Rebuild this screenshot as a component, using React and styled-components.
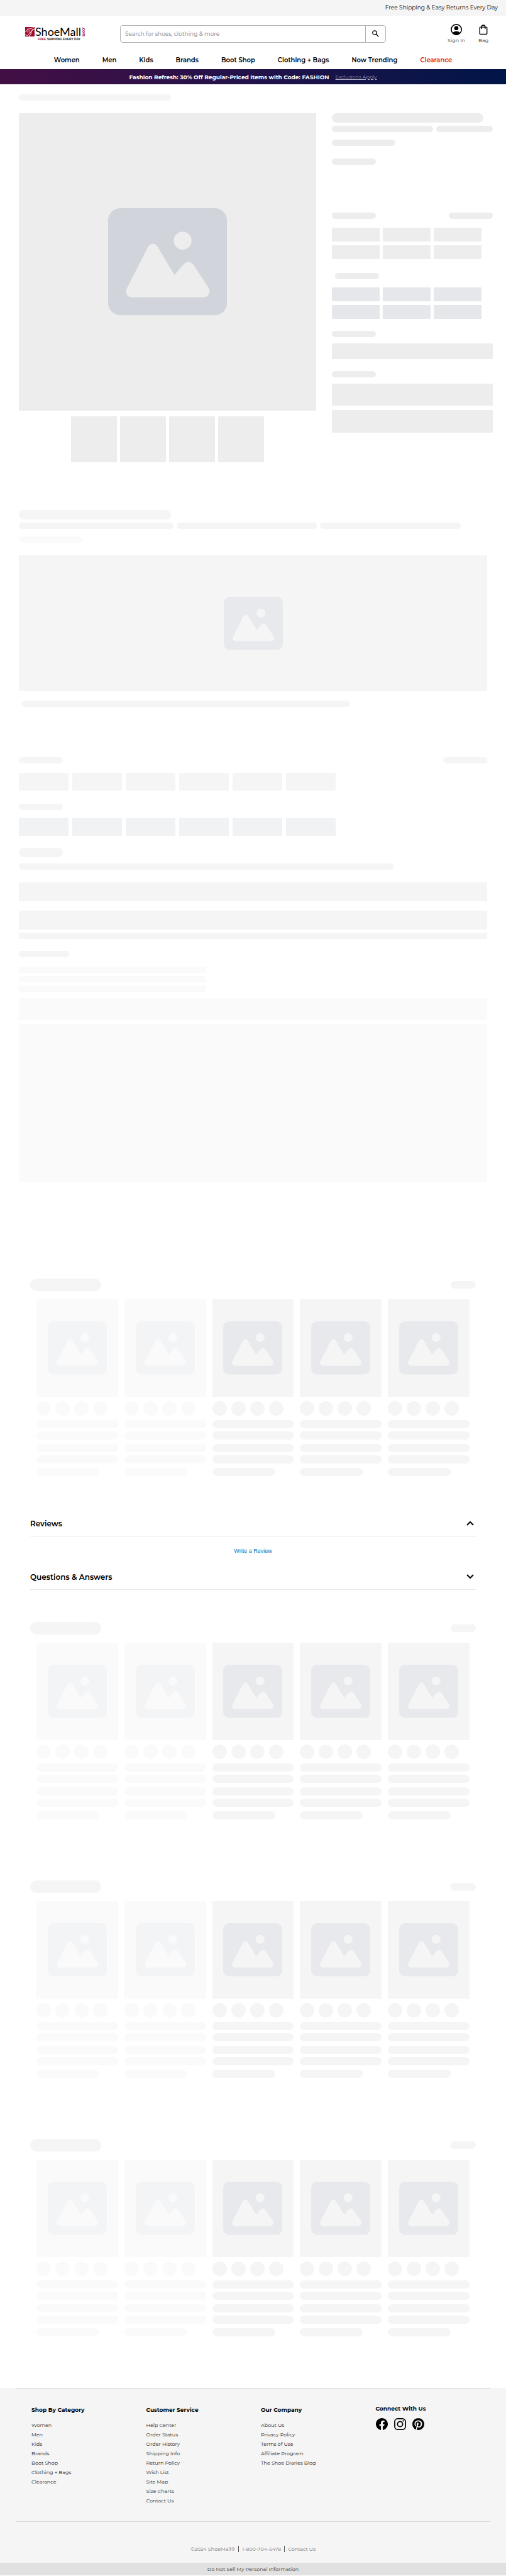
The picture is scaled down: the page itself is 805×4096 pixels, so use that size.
import React from "react";
import styled, { createGlobalStyle } from "styled-components";

const GlobalStyle = createGlobalStyle`
  *, *::before, *::after { box-sizing: border-box; }
  body { margin: 0; background: #fff; color: #000; font-family: Montserrat, Inter, "Liberation Sans", sans-serif; }
  a { color: inherit; text-decoration: none; }
  button { font: inherit; color: inherit; background: none; border: 0; padding: 0; cursor: pointer; }
  ul, h2, h3, p { margin: 0; padding: 0; list-style: none; }
  svg { display: block; }
`;

/* ---------- header ---------- */

const TopBar = styled.div`
  background: #f5f5f5;
  padding: 0 13px;
  font-size: 9px;
  line-height: 24px;
  padding-bottom: 1px;
  text-align: right;
`;

const HeaderRow = styled.div`
  display: flex;
  align-items: center;
  padding: 13px 27px 13px 40px;
`;

const LogoLink = styled.a`
  display: grid;
  grid-template-columns: 16px auto 7px;
  align-items: center;
  width: 97px;
  margin-right: 54px;
`;

const LogoMark = styled.svg`
  width: 15px;
  height: 15px;
`;

const Wordmark = styled.span`
  font: 400 18px/18px Lato, "Liberation Sans", sans-serif;
  white-space: nowrap;
`;

const DotCom = styled.span`
  writing-mode: vertical-rl;
  font: 700 7px/7px Lato, "Liberation Sans", sans-serif;
  color: #9e0b2e;
`;

const Tagline = styled.span`
  grid-column: 1 / -1;
  padding-left: 20px;
  font: 700 5px/7px "Liberation Sans", sans-serif;
  color: #222;
  white-space: nowrap;
  b { color: #9e0b2e; }
`;

const SearchForm = styled.form`
  flex: 1;
  display: flex;
  height: 28px;
  margin-right: 98px;
  border: 1px solid #b3b3b3;
  border-radius: 4px;
`;

const SearchInput = styled.input`
  flex: 1;
  min-width: 0;
  padding: 0 7px;
  border: 0;
  outline: 0;
  background: none;
  font: 400 9px Montserrat, Inter, sans-serif;
  &::placeholder { color: #757b87; opacity: 1; }
`;

const SearchButton = styled.button`
  display: grid;
  place-items: center;
  width: 32px;
  border-left: 1px solid #b3b3b3;
`;

const Action = styled.a`
  display: flex;
  flex-direction: column;
  align-items: center;
  gap: 3px;
  margin-left: ${(p) => (p.$spaced ? "20px" : "0")};
  font-size: 8px;
  line-height: 10px;
  color: #333;
`;

const Nav = styled.nav`
  display: flex;
  justify-content: center;
  gap: 36px;
  font-size: 10px;
  font-weight: 600;
  line-height: 28px;
  white-space: nowrap;
`;

const NavLink = styled.a`
  color: ${(p) => (p.$sale ? "#e31b23" : "#000")};
`;

const Promo = styled.div`
  display: flex;
  justify-content: center;
  align-items: center;
  gap: 10px;
  height: 24px;
  background: linear-gradient(90deg, #430f45, #22134a 50%, #001548);
  color: #fff;
  font-size: 9px;
  font-weight: 700;
`;

const PromoLink = styled.a`
  font-size: 8px;
  font-weight: 300;
  color: #b9b8cc;
  text-decoration: underline;
`;

/* ---------- placeholders ---------- */

const tones = {
  strong: "#ededed",
  cool: "#e5e7eb",
  soft: "#f5f5f5",
  softCool: "#f1f2f4",
  faint: "#fafafa",
};

const Bar = styled.div`
  flex: none;
  width: ${(p) => p.$w || "100%"};
  height: ${(p) => p.$h || 10}px;
  border-radius: ${(p) => (p.$square ? "0" : "8px")};
  background: ${(p) => tones[p.$tone || "soft"]};
`;

const Stack = styled.div`
  display: flex;
  flex-direction: column;
  gap: ${(p) => p.$gap || 0}px;
  padding-top: ${(p) => p.$top || 0}px;
`;

const Line = styled.div`
  display: flex;
  justify-content: ${(p) => (p.$between ? "space-between" : "flex-start")};
  gap: ${(p) => p.$gap || 5}px;
`;

const Indented = styled.div`
  padding-left: 5px;
`;

const ImageBox = styled.div`
  display: grid;
  place-items: center;
  background: ${(p) => tones[p.$tone]};
  color: ${(p) => tones[p.$tone]};
  ${(p) => (p.$h ? `height: ${p.$h}px;` : "aspect-ratio: 1;")}
`;

const Picture = styled.svg`
  width: ${(p) => (p.$large ? "40%" : "94px")};
  height: auto;
`;

function Placeholder({ large, color }) {
  return (
    <Picture $large={large} viewBox="0 0 300 270" aria-hidden="true">
      <rect width="300" height="270" rx="31" fill={color} />
      <circle cx="188" cy="82" r="22.5" fill="currentColor" />
      <path
        fill="currentColor"
        d="M47 203 L100 99 Q105 90 113 90 Q121 90 126 99 L167.5 168.5 L190 142 Q202 129 215 142 L254 202 Q259 212 251 221 Q247 225 241 225 H60 Q45 223 45.500 210 Q45.500 206 47 203 Z"
      />
    </Picture>
  );
}

/* ---------- product ---------- */

const Crumbs = styled.div`
  padding: 16px 30px 20px;
`;

const Product = styled.section`
  display: grid;
  grid-template-columns: 24fr 13fr;
  gap: 25px;
  padding: 0 21px 0 30px;
`;

const Thumbs = styled.div`
  display: flex;
  justify-content: center;
  gap: 5px;
  padding-top: 9px;
`;

const Swatches = styled.div`
  display: grid;
  grid-template-columns: repeat(3, 76px);
  gap: 6px 5px;
`;

const Details = styled.section`
  padding: 76px 30px 0;
`;

function SwatchGrid({ tone }) {
  return (
    <Swatches>
      {[0, 1, 2, 3, 4, 5].map((i) => (
        <Bar key={i} $square $h={22} $tone={tone} />
      ))}
    </Swatches>
  );
}

function SwatchRow({ tone }) {
  return (
    <Line $gap={6}>
      {[0, 1, 2, 3, 4, 5].map((i) => (
        <Bar key={i} $square $w="79px" $h={28} $tone={tone} />
      ))}
    </Line>
  );
}

/* ---------- carousels ---------- */

const Carousel = styled.section`
  padding: ${(p) => p.$top}px 48px 0;
`;

const CarouselHead = styled.div`
  display: flex;
  justify-content: space-between;
  align-items: center;
`;

const Pill = styled(Bar)`
  border-radius: 10px;
`;

const Cards = styled.div`
  display: grid;
  grid-template-columns: repeat(5, 1fr);
  gap: 10px;
  padding: 13px 10px 0;
`;

const Dots = styled.div`
  display: flex;
  gap: 7px;
`;

const Dot = styled.span`
  width: 23px;
  height: 23px;
  border-radius: 50%;
  background: ${(p) => tones[p.$tone]};
`;

function Card({ tone }) {
  return (
    <Stack $gap={7}>
      <ImageBox $tone={tone} $h={155}>
        <Placeholder color={tone === "faint" ? "#f3f4f6" : "#e8e9ed"} />
      </ImageBox>
      <Dots>
        {[0, 1, 2, 3].map((i) => (
          <Dot key={i} $tone={tone} />
        ))}
      </Dots>
      <Stack $gap={5}>
        <Bar $h={13} $tone={tone} />
        <Bar $h={13} $tone={tone} />
      </Stack>
      <Stack $gap={5}>
        <Bar $h={13} $tone={tone} />
        <Bar $h={13} $tone={tone} />
      </Stack>
      <Bar $h={13} $w="77%" $tone={tone} />
    </Stack>
  );
}

function ProductCarousel({ top }) {
  return (
    <Carousel $top={top}>
      <CarouselHead>
        <Pill $w="113px" $h={20} />
        <Pill $w="40px" $h={12} />
      </CarouselHead>
      <Cards>
        {["faint", "faint", "soft", "soft", "soft"].map((tone, i) => (
          <Card key={i} tone={tone} />
        ))}
      </Cards>
    </Carousel>
  );
}

/* ---------- accordions ---------- */

const Accordions = styled.section`
  padding: 56px 48px 0;
`;

const AccordionButton = styled.button`
  display: flex;
  justify-content: space-between;
  align-items: center;
  width: 100%;
  height: 40px;
  padding-right: 3px;
  border-bottom: 1px solid #e5e7eb;
  font-size: 12px;
  font-weight: 600;
`;

const ReviewPanel = styled.div`
  padding: 15px 0 14px;
  text-align: center;
  font: 400 9px/16px "Liberation Sans", sans-serif;
  color: #0077c0;
`;

function Chevron({ up }) {
  return (
    <svg width="12" height="8" viewBox="0 0 12 8" fill="none" stroke="#000" strokeWidth="2" aria-hidden="true">
      <path d={up ? "M1 7 L6 2 L11 7" : "M1 1 L6 6 L11 1"} />
    </svg>
  );
}

/* ---------- footer ---------- */

const Footer = styled.footer`
  margin-top: 82px;
  padding: 0 25px;
  background: #f5f5f5;
`;

const FooterGrid = styled.div`
  display: grid;
  grid-template-columns: repeat(4, 1fr);
  height: 213px;
  padding: 27px 0 0 25px;
  border: solid #d8d8d8;
  border-width: 1px 0;
`;

const FooterHeading = styled.h3`
  font-size: 9px;
  font-weight: 700;
  line-height: ${(p) => (p.$tight ? "10px" : "14px")};
`;

const FooterList = styled.ul`
  padding-top: 10px;
  font-size: 8px;
  line-height: 15px;
  color: #222;
`;

const Social = styled.div`
  display: flex;
  gap: 10px;
  padding-top: 10px;
`;

const Legal = styled.div`
  display: flex;
  justify-content: center;
  padding: 38px 0 17px;
  font-size: 8px;
  line-height: 10px;
  color: #757575;
  > * { padding: 0 5px; }
  > * + * { border-left: 1px solid #555; }
`;

const Privacy = styled.div`
  background: #e1e1e1;
  text-align: center;
  font-size: 8px;
  line-height: 20px;
  color: #333;
`;

const columns = [
  ["Shop By Category", ["Women", "Men", "Kids", "Brands", "Boot Shop", "Clothing + Bags", "Clearance"]],
  ["Customer Service", ["Help Center", "Order Status", "Order History", "Shipping Info", "Return Policy", "Wish List", "Site Map", "Size Charts", "Contact Us"]],
  ["Our Company", ["About Us", "Privacy Policy", "Terms of Use", "Affiliate Program", "The Shoe Diaries Blog"]],
];

const navItems = ["Women", "Men", "Kids", "Brands", "Boot Shop", "Clothing + Bags", "Now Trending", "Clearance"];

export default function App() {
  return (
    <>
      <GlobalStyle />
      <header>
        <TopBar>Free Shipping &amp; Easy Returns Every Day</TopBar>
        <HeaderRow>
          <LogoLink href="#home" aria-label="ShoeMall home">
            <LogoMark viewBox="0 0 24 24" fill="none" stroke="#fff" aria-hidden="true">
              <rect width="24" height="24" fill="#9e0b2e" stroke="none" />
              <path strokeWidth="1.5" d="M0 13 Q5 11 6 5 Q12 6 22 1 M24 5 Q17 6 16 14 Q14 20 10 24 M0 19 Q5 24 10 18 Q15 12 20 5" />
              <path strokeWidth="1.2" d="M7 9 Q6 13 8 16 M10 8 Q9 12 11 14" />
            </LogoMark>
            <Wordmark>ShoeMall</Wordmark>
            <DotCom>.com</DotCom>
            <Tagline><b>FREE</b> SHIPPING EVERY DAY</Tagline>
          </LogoLink>
          <SearchForm role="search" onSubmit={(e) => e.preventDefault()}>
            <SearchInput type="search" aria-label="Search" placeholder="Search for shoes, clothing & more" />
            <SearchButton type="submit" aria-label="Submit search">
              <svg width="11" height="11" viewBox="0 0 11 11" fill="none" stroke="#000" strokeWidth="1.3" aria-hidden="true">
                <circle cx="4" cy="4" r="3.2" />
                <path d="M6.300 6.300 L10.300 10.300" />
              </svg>
            </SearchButton>
          </SearchForm>
          <Action href="#signin">
            <svg width="18" height="18" viewBox="0 0 28 28" aria-hidden="true">
              <circle cx="14" cy="14" r="12.7" fill="none" stroke="#000" strokeWidth="2.600" />
              <circle cx="14" cy="10.500" r="5.200" />
              <path d="M4.500 22 Q8 18 14 18 Q20 18 23.500 22 Q19.500 27 14 27 Q8.500 27 4.500 22Z" />
            </svg>
            Sign In
          </Action>
          <Action href="#bag" $spaced>
            <svg width="18" height="18" viewBox="0 0 28 28" fill="none" stroke="#000" strokeWidth="2.200" aria-hidden="true">
              <rect x="5.100" y="8" width="17.800" height="17.500" rx="1.500" />
              <path d="M9.800 13 V7 Q9.800 3 14 3 Q18.200 3 18.200 7 V13" />
            </svg>
            Bag
          </Action>
        </HeaderRow>
        <Nav aria-label="Main">
          {navItems.map((t) => (
            <NavLink key={t} href="#nav" $sale={t === "Clearance"}>{t}</NavLink>
          ))}
        </Nav>
        <Promo>
          Fashion Refresh: 30% Off Regular-Priced Items with Code: FASHION
          <PromoLink href="#exclusions">Exclusions Apply</PromoLink>
        </Promo>
      </header>

      <main>
        <Crumbs><Bar $w="242px" /></Crumbs>

        <Product>
          <div>
            <ImageBox $tone="strong">
              <Placeholder large color="#d1d5db" />
            </ImageBox>
            <Thumbs>
              {[0, 1, 2, 3].map((i) => (
                <Bar key={i} $square $w="73px" $h={73} $tone="strong" />
              ))}
            </Thumbs>
          </div>
          <div>
            <Stack $gap={5}>
              <Bar $w="241px" $h={15} $tone="strong" />
              <Line>
                <Bar $w="161px" $tone="strong" />
                <Bar $w="90px" $tone="strong" />
              </Line>
            </Stack>
            <Stack $top={12} $gap={20}>
              <Bar $w="101px" $tone="strong" />
              <Bar $w="70px" $tone="strong" />
            </Stack>
            <Stack $top={76} $gap={14}>
              <Line $between>
                <Bar $w="70px" $tone="strong" />
                <Bar $w="70px" $tone="strong" />
              </Line>
              <SwatchGrid tone="strong" />
            </Stack>
            <Stack $top={22} $gap={13}>
              <Indented><Bar $w="70px" $tone="strong" /></Indented>
              <SwatchGrid tone="cool" />
            </Stack>
            <Stack $top={19} $gap={10}>
              <Bar $w="70px" $tone="strong" />
              <Bar $square $h={25} $tone="strong" />
            </Stack>
            <Stack $top={19} $gap={10}>
              <Bar $w="70px" $tone="strong" />
              <Bar $square $h={35} $tone="strong" />
            </Stack>
            <Stack $top={7}>
              <Bar $square $h={36} $tone="strong" />
            </Stack>
          </div>
        </Product>

        <Details>
          <Stack $gap={5}>
            <Bar $w="242px" $h={15} />
            <Line>
              <Bar $w="33%" />
              <Bar $w="30%" />
              <Bar $w="30%" />
            </Line>
          </Stack>
          <Stack $top={12} $gap={20}>
            <Bar $w="101px" $tone="faint" />
            <ImageBox $tone="soft" $h={216}>
              <Placeholder color="#e8e9ed" />
            </ImageBox>
          </Stack>
          <Stack $top={15}>
            <Indented><Bar $w="calc(70% + 4px)" /></Indented>
          </Stack>
          <Stack $top={80} $gap={15}>
            <Line $between>
              <Bar $w="70px" />
              <Bar $w="70px" />
            </Line>
            <SwatchRow tone="soft" />
          </Stack>
          <Stack $top={21} $gap={13}>
            <Bar $w="70px" />
            <SwatchRow tone="softCool" />
          </Stack>
          <Stack $top={19} $gap={10}>
            <Bar $w="70px" $h={15} />
            <Bar $w="80%" />
          </Stack>
          <Stack $top={20} $gap={15}>
            <Bar $square $h={30} />
            <Bar $square $h={30} />
          </Stack>
          <Stack $top={5} $gap={19}>
            <Bar $square />
            <Bar $w="80px" />
          </Stack>
          <Stack $top={15} $gap={5}>
            <Bar $square $w="40%" $tone="faint" />
            <Bar $square $w="40%" $tone="faint" />
            <Bar $square $w="40%" $tone="faint" />
          </Stack>
          <Stack $top={10} $gap={7}>
            <Bar $square $h={35} $tone="faint" />
            <Bar $square $h={251} $tone="faint" />
          </Stack>
        </Details>

        <ProductCarousel top={153} />

        <Accordions>
          <h2><AccordionButton type="button" aria-expanded="true">Reviews<Chevron up /></AccordionButton></h2>
          <ReviewPanel><a href="#review">Write a Review</a></ReviewPanel>
          <h2><AccordionButton type="button" aria-expanded="false">Questions &amp; Answers<Chevron /></AccordionButton></h2>
        </Accordions>

        <ProductCarousel top={51} />
        <ProductCarousel top={97} />
        <ProductCarousel top={97} />
      </main>

      <Footer>
        <FooterGrid>
          {columns.map(([title, links]) => (
            <div key={title}>
              <FooterHeading>{title}</FooterHeading>
              <FooterList>
                {links.map((l) => (
                  <li key={l}><a href="#footer">{l}</a></li>
                ))}
              </FooterList>
            </div>
          ))}
          <div>
            <FooterHeading $tight>Connect With Us</FooterHeading>
            <Social>
              <a href="#facebook" aria-label="Facebook">
                <svg width="19" height="19" viewBox="0 0 24 24" aria-hidden="true">
                  <path d="M24 12.073C24 5.446 18.627.073 12 .073S0 5.446 0 12.073c0 5.990 4.388 10.954 10.125 11.854v-8.385H7.078v-3.470h3.047V9.430c0-3.007 1.792-4.669 4.533-4.669 1.312 0 2.686.235 2.686.235v2.953H15.830c-1.491 0-1.956.925-1.956 1.874v2.250h3.328l-.532 3.470h-2.796v8.385C19.612 23.027 24 18.062 24 12.073z" />
                </svg>
              </a>
              <a href="#instagram" aria-label="Instagram">
                <svg width="19" height="19" viewBox="0 0 24 24" fill="none" stroke="#000" strokeWidth="2.200" aria-hidden="true">
                  <rect x="1.200" y="1.200" width="21.600" height="21.600" rx="6" />
                  <circle cx="12" cy="12" r="5.200" />
                  <circle cx="18.400" cy="5.600" r="1.400" fill="#000" stroke="none" />
                </svg>
              </a>
              <a href="#pinterest" aria-label="Pinterest">
                <svg width="19" height="19" viewBox="0 0 24 24" aria-hidden="true">
                  <path d="M12.017 0C5.396 0 .029 5.367.029 11.987c0 5.079 3.158 9.417 7.618 11.162-.105-.949-.199-2.403.041-3.439.219-.937 1.406-5.957 1.406-5.957s-.359-.720-.359-1.781c0-1.663.967-2.911 2.168-2.911 1.024 0 1.518.769 1.518 1.688 0 1.029-.653 2.567-.992 3.992-.285 1.193.600 2.165 1.775 2.165 2.128 0 3.768-2.245 3.768-5.487 0-2.861-2.063-4.869-5.008-4.869-3.410 0-5.409 2.562-5.409 5.199 0 1.033.394 2.143.889 2.741.099.120.112.225.085.345-.090.375-.293 1.199-.334 1.363-.053.225-.172.271-.401.165-1.495-.690-2.433-2.878-2.433-4.646 0-3.776 2.748-7.252 7.920-7.252 4.158 0 7.392 2.967 7.392 6.923 0 4.135-2.607 7.462-6.233 7.462-1.214 0-2.354-.629-2.758-1.379l-.749 2.848c-.269 1.045-1.004 2.352-1.498 3.146 1.123.345 2.306.535 3.550.535 6.607 0 11.985-5.365 11.985-11.987C23.970 5.390 18.592.026 11.985.026L12.017 0z" />
                </svg>
              </a>
            </Social>
          </div>
        </FooterGrid>
        <Legal>
          <span>©2024 ShoeMall®</span>
          <a href="tel:18007045478">1-800-704-5478</a>
          <a href="#contact">Contact Us</a>
        </Legal>
      </Footer>
      <Privacy><a href="#privacy">Do Not Sell My Personal Information</a></Privacy>
    </>
  );
}
